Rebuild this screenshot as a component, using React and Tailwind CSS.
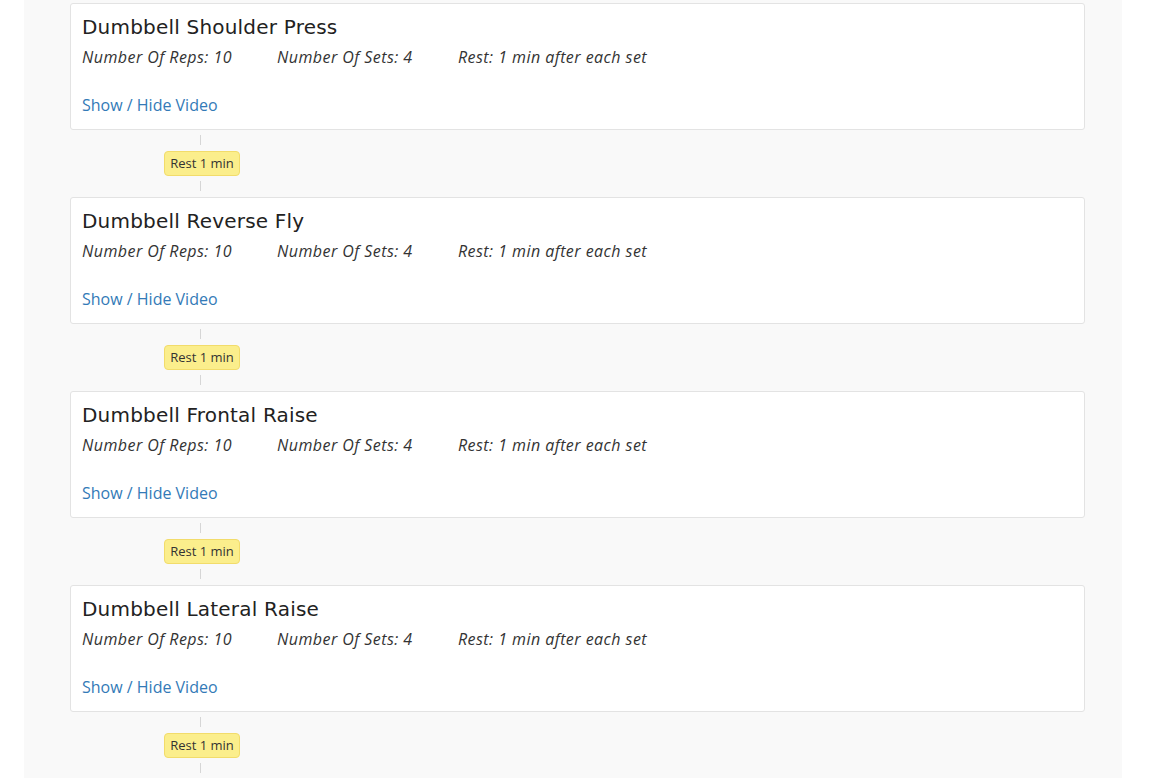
import React from 'react'

const exercises = [
  'Dumbbell Shoulder Press',
  'Dumbbell Reverse Fly',
  'Dumbbell Frontal Raise',
  'Dumbbell Lateral Raise',
]

function ExerciseCard({ name }) {
  return (
    <div className="bg-white border border-[#e3e3e3] rounded-[3px] px-[11px] pt-[10px] pb-[13px]">
      <h3 className="text-[20px] leading-[26px] text-[#222] font-['DejaVu_Sans',sans-serif] tracking-[0.2px]">
        {name}
      </h3>
      <div className="flex mt-[6px] text-[16px] leading-[22px] italic text-[#333] tracking-[0.45px]">
        <span className="w-[195px]">Number Of Reps: 10</span>
        <span className="w-[181px]">Number Of Sets: 4</span>
        <span>Rest: 1 min after each set</span>
      </div>
      <div className="mt-[26px] text-[16px] leading-[22px]">
        <a href="#" className="text-[#337ab7]">Show / Hide Video</a>
      </div>
    </div>
  )
}

function RestConnector() {
  return (
    <div className="flex flex-col items-start ml-[94px] pt-[5px] pb-[6px]">
      <div className="w-[1px] h-[10px] bg-[#d6d6d6] ml-[36px]" />
      <div className="mt-[6px] h-[25px] w-[76px] flex items-center justify-center bg-[#fbee8c] border border-[#f2dc6b] rounded-[4px] text-[13px] text-[#333]">
        Rest 1 min
      </div>
      <div className="mt-[5px] w-[1px] h-[10px] bg-[#d6d6d6] ml-[36px]" />
    </div>
  )
}

export default function App() {
  return (
    <div className="w-full h-[778px] bg-white overflow-hidden font-['Open_Sans',sans-serif]">
      <div className="ml-[24px] w-[1098px] h-full bg-[#f9f9f9] pl-[46px] pr-[37px] pt-[3px]">
        {exercises.map((name) => (
          <div key={name}>
            <ExerciseCard name={name} />
            <RestConnector />
          </div>
        ))}
      </div>
    </div>
  )
}
